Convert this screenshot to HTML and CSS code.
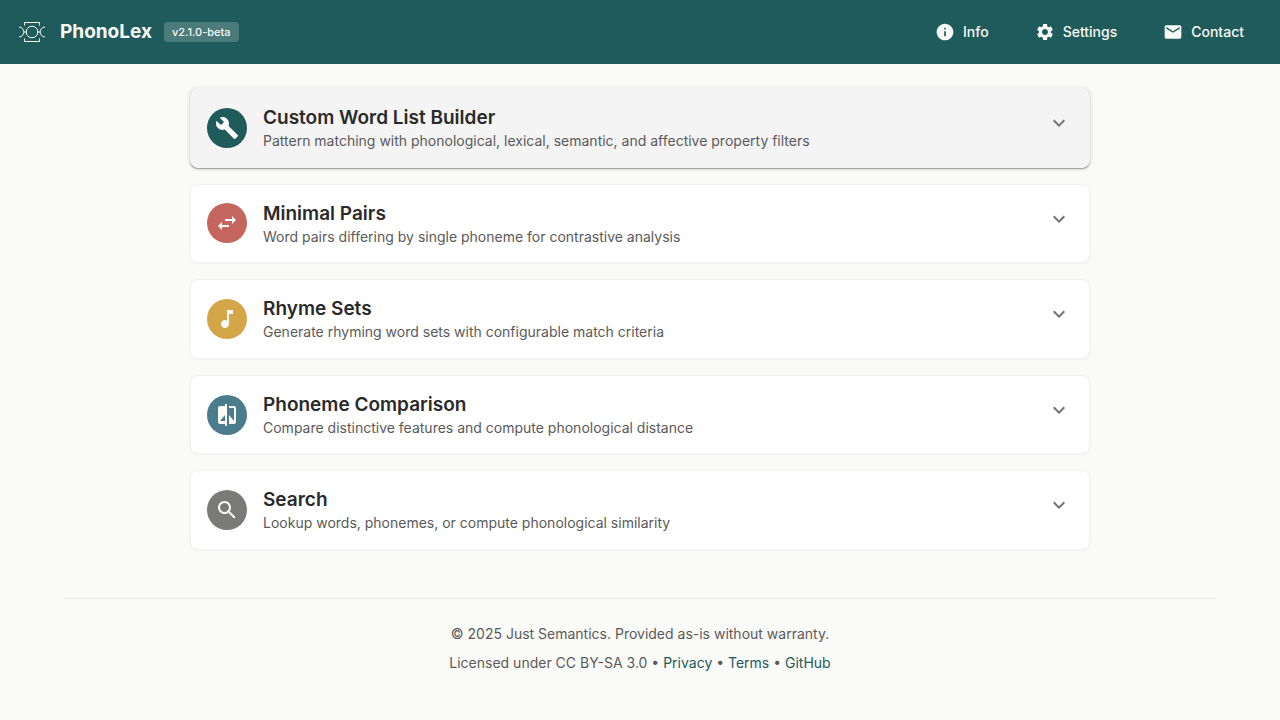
FILE: index.html
```html
<!DOCTYPE html>
<html lang="en">
<head>
<meta charset="utf-8">
<meta name="viewport" content="width=device-width, initial-scale=1">
<title>PhonoLex</title>
<link rel="stylesheet" href="styles.css">
</head>
<body>
<header class="topbar">
  <svg class="logo" viewBox="0 0 32 32" aria-hidden="true">
    <path d="M8.500 9.500V6.500H23.500V9.500M8.500 22.500V25.500H23.500V22.500"/>
    <circle cx="16" cy="16" r="5.800"/>
    <path d="M3 11C9.500 11.500 9.500 20.500 3 21M29 11C22.500 11.500 22.500 20.500 29 21M7.900 16H10.200M21.800 16H24.100"/>
  </svg>
  <h1 class="brand">PhonoLex</h1>
  <span class="version">v2.1.0-beta</span>
  <nav class="nav">
    <button class="nav-button" type="button">
      <svg class="icon" viewBox="0 0 24 24" aria-hidden="true"><path d="M12 2C6.480 2 2 6.480 2 12s4.480 10 10 10 10-4.480 10-10S17.520 2 12 2m1 15h-2v-6h2zm0-8h-2V7h2z"/></svg>
      Info
    </button>
    <button class="nav-button" type="button">
      <svg class="icon" viewBox="0 0 24 24" aria-hidden="true"><path d="M19.140 12.940c.04-.3.060-.61.060-.94 0-.32-.02-.64-.07-.94l2.030-1.580c.18-.14.230-.41.120-.61l-1.920-3.320c-.12-.22-.37-.29-.59-.22l-2.390.96c-.5-.38-1.030-.7-1.620-.94l-.36-2.540c-.04-.24-.24-.41-.48-.41h-3.840c-.24 0-.43.170-.47.410l-.36 2.540c-.59.240-1.130.570-1.620.940l-2.390-.96c-.22-.08-.47 0-.59.220L2.740 8.870c-.12.210-.08.470.120.610l2.030 1.580c-.05.300-.09.630-.09.940s.02.640.070.940l-2.030 1.580c-.18.140-.23.410-.12.610l1.920 3.320c.12.220.370.290.590.220l2.390-.96c.5.380 1.030.700 1.620.940l.36 2.540c.05.240.240.410.480.410h3.840c.24 0 .440-.17.470-.41l.36-2.540c.59-.24 1.130-.56 1.620-.94l2.390.96c.22.080.470 0 .590-.22l1.920-3.320c.12-.22.070-.47-.12-.61zM12 15.600c-1.980 0-3.600-1.620-3.600-3.600s1.620-3.600 3.600-3.600 3.600 1.620 3.600 3.600-1.620 3.600-3.600 3.600"/></svg>
      Settings
    </button>
    <button class="nav-button" type="button">
      <svg class="icon" viewBox="0 0 24 24" aria-hidden="true"><path d="M20 4H4c-1.100 0-1.990.900-1.990 2L2 18c0 1.100.900 2 2 2h16c1.100 0 2-.9 2-2V6c0-1.100-.9-2-2-2m0 4-8 5-8-5V6l8 5 8-5z"/></svg>
      Contact
    </button>
  </nav>
</header>

<main class="tools">
  <article class="card card-active">
    <span class="avatar avatar-teal"><svg class="icon-large" viewBox="0 0 24 24" aria-hidden="true"><path d="m22.700 19-9.100-9.100c.9-2.300.4-5-1.500-6.900-2-2-5-2.400-7.400-1.300L9 6 6 9 1.600 4.700C.4 7.100.9 10.100 2.900 12.100c1.900 1.900 4.600 2.400 6.900 1.500l9.100 9.100c.4.400 1 .4 1.400 0l2.300-2.300c.5-.4.5-1.100.1-1.400"/></svg></span>
    <div class="card-text">
      <h2 class="card-title">Custom Word List Builder</h2>
      <p class="card-desc">Pattern matching with phonological, lexical, semantic, and affective property filters</p>
    </div>
    <button class="expand" type="button" aria-label="Expand Custom Word List Builder"><svg class="icon-large" viewBox="0 0 24 24" aria-hidden="true"><path d="M16.590 8.590 12 13.170 7.410 8.590 6 10l6 6 6-6z"/></svg></button>
  </article>
  <article class="card">
    <span class="avatar avatar-coral"><svg class="icon-large" viewBox="0 0 24 24" aria-hidden="true"><path d="M6.990 11 3 15l3.990 4v-3H14v-2H6.990zM21 9l-3.990-4v3H10v2h7.010v3z"/></svg></span>
    <div class="card-text">
      <h2 class="card-title">Minimal Pairs</h2>
      <p class="card-desc">Word pairs differing by single phoneme for contrastive analysis</p>
    </div>
    <button class="expand" type="button" aria-label="Expand Minimal Pairs"><svg class="icon-large" viewBox="0 0 24 24" aria-hidden="true"><path d="M16.590 8.590 12 13.170 7.410 8.590 6 10l6 6 6-6z"/></svg></button>
  </article>
  <article class="card">
    <span class="avatar avatar-gold"><svg class="icon-large" viewBox="0 0 24 24" aria-hidden="true"><path d="M12 3v10.550c-.59-.34-1.270-.55-2-.55-2.210 0-4 1.790-4 4s1.790 4 4 4 4-1.790 4-4V7h4V3z"/></svg></span>
    <div class="card-text">
      <h2 class="card-title">Rhyme Sets</h2>
      <p class="card-desc">Generate rhyming word sets with configurable match criteria</p>
    </div>
    <button class="expand" type="button" aria-label="Expand Rhyme Sets"><svg class="icon-large" viewBox="0 0 24 24" aria-hidden="true"><path d="M16.590 8.590 12 13.170 7.410 8.590 6 10l6 6 6-6z"/></svg></button>
  </article>
  <article class="card">
    <span class="avatar avatar-blue"><svg class="icon-large" viewBox="0 0 24 24" aria-hidden="true"><path d="M10 3H5c-1.100 0-2 .9-2 2v14c0 1.100.900 2 2 2h5v2h2V1h-2zm0 15H5l5-6zm9-15h-5v2h5v13l-5-6v9h5c1.100 0 2-.9 2-2V5c0-1.100-.9-2-2-2"/></svg></span>
    <div class="card-text">
      <h2 class="card-title">Phoneme Comparison</h2>
      <p class="card-desc">Compare distinctive features and compute phonological distance</p>
    </div>
    <button class="expand" type="button" aria-label="Expand Phoneme Comparison"><svg class="icon-large" viewBox="0 0 24 24" aria-hidden="true"><path d="M16.590 8.590 12 13.170 7.410 8.590 6 10l6 6 6-6z"/></svg></button>
  </article>
  <article class="card">
    <span class="avatar avatar-gray"><svg class="icon-large" viewBox="0 0 24 24" aria-hidden="true"><path d="M15.500 14h-.79l-.28-.27C15.410 12.590 16 11.110 16 9.500 16 5.910 13.090 3 9.500 3S3 5.910 3 9.500 5.910 16 9.500 16c1.610 0 3.090-.59 4.230-1.570l.27.280v.790l5 4.990L20.490 19zm-6 0C7.010 14 5 11.990 5 9.500S7.010 5 9.500 5 14 7.010 14 9.500 11.990 14 9.500 14"/></svg></span>
    <div class="card-text">
      <h2 class="card-title">Search</h2>
      <p class="card-desc">Lookup words, phonemes, or compute phonological similarity</p>
    </div>
    <button class="expand" type="button" aria-label="Expand Search"><svg class="icon-large" viewBox="0 0 24 24" aria-hidden="true"><path d="M16.590 8.590 12 13.170 7.410 8.590 6 10l6 6 6-6z"/></svg></button>
  </article>
</main>

<footer class="footer">
  <p class="footer-line">© 2025 Just Semantics. Provided as-is without warranty.</p>
  <p class="footer-line">Licensed under CC BY-SA 3.0 • <a class="link" href="#privacy">Privacy</a> • <a class="link" href="#terms">Terms</a> • <a class="link" href="#github">GitHub</a></p>
</footer>
</body>
</html>
```
FILE: styles.css
```css
* {
  box-sizing: border-box;
}

body {
  margin: 0;
  background: #fafaf8;
  color: #2a2a2a;
  font-family: Inter, "Liberation Sans", sans-serif;
  font-size: 14px;
}

h1, h2, p {
  margin: 0;
}

button {
  border: 0;
  background: none;
  font: inherit;
  color: inherit;
  cursor: pointer;
}

.topbar {
  display: flex;
  align-items: center;
  gap: 12px;
  height: 64px;
  padding: 0 20px 0 16px;
  background: #1f5b5b;
  color: #fafaf8;
}

.logo {
  width: 32px;
  height: 32px;
  fill: none;
  stroke: #fafaf8;
  stroke-width: 1;
}

.brand {
  font-size: 19px;
  font-weight: 700;
  line-height: 32px;
}

.version {
  padding: 0 8px;
  border-radius: 4px;
  background: rgba(255, 255, 255, 0.2);
  font-size: 11px;
  font-weight: 500;
  line-height: 20px;
}

.nav {
  display: flex;
  gap: 14px;
  margin-left: auto;
}

.nav-button {
  display: flex;
  align-items: center;
  gap: 8px;
  padding: 8px 16px;
  font-weight: 500;
  line-height: 20px;
}

.icon {
  width: 20px;
  height: 20px;
  fill: currentColor;
}

.icon-large {
  width: 24px;
  height: 24px;
  fill: currentColor;
}

.tools {
  display: flex;
  flex-direction: column;
  gap: 16px;
  max-width: 932px;
  margin: 0 auto;
  padding: 24px 16px 48px;
}

.card {
  display: flex;
  align-items: center;
  gap: 16px;
  padding: 16px;
  border: 1px solid #f2f2f1;
  border-radius: 8px;
  background: #ffffff;
  box-shadow: 0 1px 3px rgba(0, 0, 0, 0.04);
}

.card-active {
  border-color: #f4f4f4;
  background: #f4f4f4;
  box-shadow: 0 1px 1px rgba(0, 0, 0, 0.3), 0 1px 4px rgba(0, 0, 0, 0.16);
}

.avatar {
  display: flex;
  align-items: center;
  justify-content: center;
  flex: none;
  width: 40px;
  height: 40px;
  border-radius: 50%;
  color: #fafaf8;
}

.avatar-teal { background: #1f5b5b; }
.avatar-coral { background: #c4665e; }
.avatar-gold { background: #d4a647; }
.avatar-blue { background: #4a7c8c; }
.avatar-gray { background: #7a7a78; }

.card-text {
  flex: 1;
  min-width: 0;
}

.card-title {
  font-size: 19px;
  font-weight: 600;
  line-height: 26px;
}

.card-desc {
  color: #5a5a5a;
  line-height: 1.4;
}

.expand {
  display: flex;
  align-items: center;
  justify-content: center;
  align-self: flex-start;
  width: 44px;
  height: 44px;
  margin: -4px -8px -4px 0;
  padding: 0;
  color: #747474;
}

.footer {
  margin: 0 64px;
  padding: 24px 0;
  border-top: 1px solid #e8e8e6;
  color: #5a5a5a;
  text-align: center;
}

.footer-line {
  line-height: 21px;
}

.footer-line + .footer-line {
  margin-top: 8px;
}

.link {
  color: #1f5b5b;
  text-decoration: none;
}
```
